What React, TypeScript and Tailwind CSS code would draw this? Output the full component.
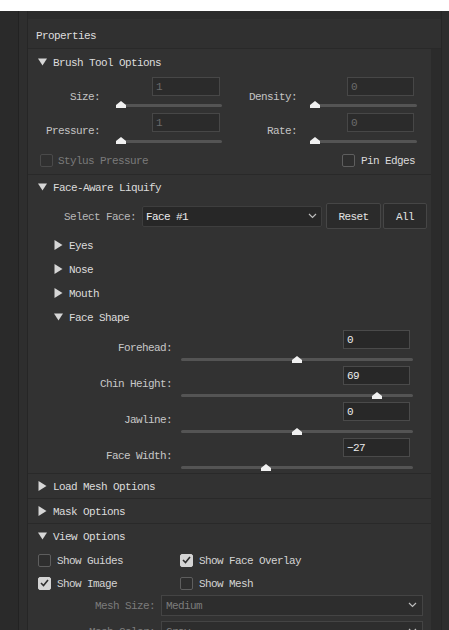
import React from "react";

function TriDown() {
  return (
    <svg width="9" height="8" viewBox="0 0 9 8" className="shrink-0">
      <polygon points="0,0.5 9,0.5 4.5,7.5" fill="#d6d6d6" />
    </svg>
  );
}

function TriRight() {
  return (
    <svg width="9" height="10" viewBox="0 0 9 10" className="shrink-0">
      <polygon points="0.5,0 8.5,5 0.5,10" fill="#d6d6d6" />
    </svg>
  );
}

function Chevron() {
  return (
    <svg width="9" height="6" viewBox="0 0 9 6" className="shrink-0">
      <polyline points="1,1 4.5,4.5 8,1" fill="none" stroke="#bdbdbd" strokeWidth="1.2" />
    </svg>
  );
}

function Thumb() {
  return (
    <svg width="10" height="7" viewBox="0 0 10 7">
      <polygon points="5,0 10,4 10,7 0,7 0,4" fill="#f0f0f0" />
    </svg>
  );
}

function Slider({ className, frac, trackTop }: { className: string; frac: number; trackTop: string }) {
  return (
    <div className={`relative h-[16px] ${className}`}>
      <div className={`${trackTop} h-[3px] rounded-full bg-[#545454]`} />
      <div className={`absolute ${trackTop === "mt-[8px]" ? "top-[5px]" : "top-[7px]"}`} style={{ left: `calc(${frac * 100}% - 5px)` }}>
        <Thumb />
      </div>
    </div>
  );
}

function SectionHeader({ open, label }: { open: boolean; label: string }) {
  return (
    <div className="h-[24px] flex items-center pl-[10px] gap-[6px] text-[#dcdcdc]">
      {open ? <TriDown /> : <TriRight />}
      <span className="pt-[2px]">{label}</span>
    </div>
  );
}

function SubHeader({ open, label }: { open: boolean; label: string }) {
  return (
    <div className="h-[24px] flex items-center pl-[26px] gap-[6px] text-[#dcdcdc]">
      {open ? <TriDown /> : <TriRight />}
      <span className="pt-[2px]">{label}</span>
    </div>
  );
}

function Check({ checked, disabled }: { checked?: boolean; disabled?: boolean }) {
  const cls = checked
    ? "bg-[#d4d4d4] border-[#d4d4d4]"
    : disabled
    ? "bg-[#303030] border-[#4a4a4a]"
    : "bg-[#2e2e2e] border-[#5e5e5e]";
  return (
    <div className={`w-[13px] h-[13px] shrink-0 rounded-[2px] border flex items-center justify-center ${cls}`}>
      {checked && (
        <svg width="9" height="8" viewBox="0 0 9 8">
          <polyline points="1,4 3.5,6.5 8,1" fill="none" stroke="#2e2e2e" strokeWidth="1.6" />
        </svg>
      )}
    </div>
  );
}

function BrushCell({ label, value, labelPt, inputMl, stackMl, stackW, inputW }: { label: string; value: string; labelPt: string; inputMl: string; stackMl: string; stackW: string; inputW: string }) {
  return (
    <div className="flex h-[36px]">
      <div className={`w-[72px] text-right text-[#c4c4c4] ${labelPt}`}>{label}</div>
      <div className={`${stackMl} ${stackW} flex flex-col`}>
        <div className={`mt-[1px] ${inputMl} ${inputW} h-[19px] bg-[#2b2b2b] border border-[#474747] pl-[3px] pt-[1px] text-[#6c6c6c] leading-[17px]`}>{value}</div>
        <Slider className="w-full" frac={0} trackTop="mt-[8px]" />
      </div>
    </div>
  );
}

function FaceRow({ label, value }: { label: string; value: number }) {
  return (
    <div className="flex h-[36px]">
      <div className="w-[144px] text-right text-[#c8c8c8] pt-[13px]">{label}</div>
      <div className="ml-[9px] w-[232px] flex flex-col">
        <div className="mt-[1px] ml-[162px] w-[67px] h-[19px] bg-[#282828] border border-[#4a4a4a] pl-[3px] pt-[1px] text-[#ececec] leading-[17px]">
          {value < 0 ? "\u2212" + Math.abs(value) : String(value)}
        </div>
        <Slider className="w-full" frac={(value + 100) / 200} trackTop="mt-[9px]" />
      </div>
    </div>
  );
}

export default function App() {
  return (
    <div className="w-[449px] h-[630px] overflow-hidden bg-white flex flex-col font-['Liberation_Mono',monospace] text-[11px] tracking-[-0.6px] leading-[12px] text-[#d2d2d2]">
      <div className="h-[11px] shrink-0 bg-white" />
      <div className="flex flex-1 min-h-0 bg-[#2b2b2b]">
        <div className="w-[19px] shrink-0 bg-[#2a2a2a] border-r border-[#222222]" />
        <div className="w-[9px] shrink-0 bg-[#2e2e2e] border-r border-[#262626]" />
        <div className="w-[413px] shrink-0 flex flex-col bg-[#323232]">
          <div className="h-[8px] shrink-0 bg-[#2b2b2b]" />
          <div className="h-[30px] shrink-0 border-b border-[#292929] bg-[#303030] flex items-center pl-[8px] pt-[4px] text-[#dedede]">
            Properties
          </div>
          <div className="flex flex-1 min-h-0">
            <div className="w-[403px] shrink-0 flex flex-col">
              {/* Brush Tool Options */}
              <div className="border-b border-[#292929] pb-[2px]">
                <div className="h-[25px] flex items-center pl-[10px] gap-[6px] text-[#dcdcdc]">
                  <TriDown />
                  <span className="pt-[2px]">Brush Tool Options</span>
                </div>
                <div className="pt-[2px] flex">
                  <div className="w-[197px] flex flex-col">
                    <BrushCell label="Size:" value="1" labelPt="pt-[15px]" inputMl="ml-[31px]" stackMl="ml-[21px]" stackW="w-[101px]" inputW="w-[68px]" />
                    <BrushCell label="Pressure:" value="1" labelPt="pt-[13px]" inputMl="ml-[31px]" stackMl="ml-[21px]" stackW="w-[101px]" inputW="w-[68px]" />
                  </div>
                  <div className="flex flex-col">
                    <BrushCell label="Density:" value="0" labelPt="pt-[15px]" inputMl="ml-[32px]" stackMl="ml-[18px]" stackW="w-[102px]" inputW="w-[67px]" />
                    <BrushCell label="Rate:" value="0" labelPt="pt-[13px]" inputMl="ml-[32px]" stackMl="ml-[18px]" stackW="w-[102px]" inputW="w-[67px]" />
                  </div>
                </div>
                <div className="h-[24px] flex items-center">
                  <div className="w-[314px] flex items-center pl-[12px] gap-[5px] text-[#7a7a7a]">
                    <Check disabled />
                    <span className="pt-[2px]">Stylus Pressure</span>
                  </div>
                  <div className="flex items-center gap-[6px] text-[#dadada]">
                    <Check />
                    <span className="pt-[2px]">Pin Edges</span>
                  </div>
                </div>
              </div>

              {/* Face-Aware Liquify */}
              <div className="border-b border-[#292929]">
                <SectionHeader open label="Face-Aware Liquify" />
                <div className="h-[34px] flex items-center">
                  <div className="ml-[36px] w-[72px] pt-[2px] text-[#b8b8b8]">Select Face:</div>
                  <div className="ml-[6px] w-[180px] h-[21px] bg-[#272727] border border-[#3e3e3e] rounded-[2px] flex items-center justify-between pl-[3px] pr-[4px] text-[#ececec]">
                    <span className="pt-[2px]">Face #1</span>
                    <Chevron />
                  </div>
                  <div className="ml-[4px] w-[55px] h-[26px] bg-[#2b2b2b] border border-[#464646] rounded-[2px] flex items-center justify-center pt-[2px] text-[#e2e2e2]">
                    Reset
                  </div>
                  <div className="ml-[2px] w-[44px] h-[26px] bg-[#2b2b2b] border border-[#464646] rounded-[2px] flex items-center justify-center pt-[2px] text-[#e2e2e2]">
                    All
                  </div>
                </div>
                <SubHeader open={false} label="Eyes" />
                <SubHeader open={false} label="Nose" />
                <SubHeader open={false} label="Mouth" />
                <SubHeader open label="Face Shape" />
                <FaceRow label="Forehead:" value={0} />
                <FaceRow label="Chin Height:" value={69} />
                <FaceRow label="Jawline:" value={0} />
                <FaceRow label="Face Width:" value={-27} />
              </div>

              <div className="border-b border-[#292929]">
                <SectionHeader open={false} label="Load Mesh Options" />
              </div>
              <div className="border-b border-[#292929]">
                <SectionHeader open={false} label="Mask Options" />
              </div>

              {/* View Options */}
              <div>
                <SectionHeader open label="View Options" />
                <div className="h-[24px] flex items-center">
                  <div className="w-[152px] flex items-center pl-[10px] gap-[6px] text-[#d4d4d4]">
                    <Check />
                    <span className="pt-[2px]">Show Guides</span>
                  </div>
                  <div className="flex items-center gap-[6px] text-[#d4d4d4]">
                    <Check checked />
                    <span className="pt-[2px]">Show Face Overlay</span>
                  </div>
                </div>
                <div className="h-[22px] flex items-center">
                  <div className="w-[152px] flex items-center pl-[10px] gap-[6px] text-[#d4d4d4]">
                    <Check checked />
                    <span className="pt-[2px]">Show Image</span>
                  </div>
                  <div className="flex items-center gap-[6px] text-[#d4d4d4]">
                    <Check />
                    <span className="pt-[2px]">Show Mesh</span>
                  </div>
                </div>
                <div className="h-[22px] flex items-center">
                  <div className="w-[127px] text-right pt-[2px] text-[#7c7c7c]">Mesh Size:</div>
                  <div className="ml-[6px] w-[262px] h-[21px] bg-[#2d2d2d] border border-[#444444] flex items-center justify-between pl-[4px] pr-[5px] text-[#7c7c7c]">
                    <span className="pt-[2px]">Medium</span>
                    <Chevron />
                  </div>
                </div>
                <div className="mt-[4px] h-[22px] flex items-center">
                  <div className="w-[127px] text-right pt-[2px] text-[#7c7c7c]">Mesh Color:</div>
                  <div className="ml-[6px] w-[262px] h-[21px] bg-[#2d2d2d] border border-[#444444] flex items-center justify-between pl-[4px] pr-[5px] text-[#7c7c7c]">
                    <span className="pt-[2px]">Gray</span>
                    <Chevron />
                  </div>
                </div>
              </div>
            </div>
            <div className="w-[10px] shrink-0 bg-[#2b2b2b]" />
          </div>
        </div>
        <div className="w-[8px] shrink-0 bg-[#2d2d2d] border-l border-[#262626]" />
      </div>
    </div>
  );
}
